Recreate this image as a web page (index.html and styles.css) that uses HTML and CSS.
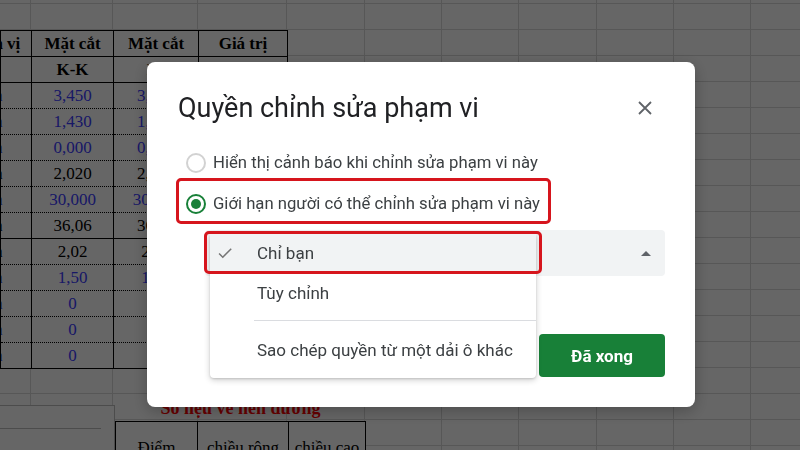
FILE: index.html
```html
<!DOCTYPE html>
<html lang="vi">
<head>
  <meta charset="UTF-8">
  <meta name="viewport" content="width=device-width, initial-scale=1.0">
  <title>Quyền chỉnh sửa phạm vi</title>
  <link rel="stylesheet" href="styles.css">
</head>
<body>

<div class="sheet">
  <table class="data">
    <colgroup>
      <col class="c0"><col class="c1"><col class="c2"><col class="c3">
    </colgroup>
    <tr class="head solid"><td class="cut"><span>Đơn vị</span></td><td>Mặt cắt</td><td>Mặt cắt</td><td>Giá trị</td></tr>
    <tr class="head solid"><td></td><td>K-K</td><td>I-I</td><td></td></tr>
    <tr class="blue"><td class="cut"><span>m</span></td><td>3,450</td><td>3,450</td><td></td></tr>
    <tr class="blue"><td class="cut"><span>m</span></td><td>1,430</td><td>1,430</td><td></td></tr>
    <tr class="blue"><td class="cut"><span>m</span></td><td>0,000</td><td>0,000</td><td></td></tr>
    <tr><td class="cut"><span>m</span></td><td>2,020</td><td>2,020</td><td></td></tr>
    <tr class="blue"><td class="cut"><span>m</span></td><td>30,000</td><td>30,000</td><td></td></tr>
    <tr class="solid"><td class="cut"><span>m</span></td><td>36,06</td><td>36,06</td><td></td></tr>
    <tr><td class="cut"><span>m</span></td><td>2,02</td><td>2,02</td><td></td></tr>
    <tr class="blue"><td class="cut"><span>m</span></td><td>1,50</td><td>1,50</td><td></td></tr>
    <tr class="blue"><td class="cut"><span>m</span></td><td>0</td><td>0</td><td></td></tr>
    <tr class="blue"><td class="cut"><span>m</span></td><td>0</td><td>0</td><td></td></tr>
    <tr class="blue solid"><td class="cut"><span>m</span></td><td>0</td><td>0</td><td></td></tr>
  </table>

  <div class="lower">
    <div class="shape"><div class="shape-line"></div></div>
    <div class="notes">
      <div class="notes-title">Số liệu về nền đường</div>
      <table class="small">
        <colgroup><col class="s1"><col class="s2"><col class="s3"></colgroup>
        <tr><td>Điểm</td><td>chiều rộng</td><td>chiều cao</td></tr>
      </table>
    </div>
  </div>
</div>

<div class="scrim">
  <div class="dialog">
    <div class="dialog-head">
      <h1 class="dialog-title">Quyền chỉnh sửa phạm vi</h1>
      <button class="close" aria-label="Đóng">
        <svg width="14" height="14" viewBox="0 0 14 14"><path d="M1 1L13 13M13 1L1 13" stroke="#5f6368" stroke-width="1.8" fill="none"/></svg>
      </button>
    </div>

    <div class="options">
      <div class="option"><span class="radio"></span>Hiển thị cảnh báo khi chỉnh sửa phạm vi này</div>
      <div class="option"><span class="radio on"></span>Giới hạn người có thể chỉnh sửa phạm vi này</div>
    </div>

    <div class="select"><span class="caret"></span></div>

    <div class="dialog-foot">
      <button class="btn-done">Đã xong</button>
    </div>

    <div class="menu">
      <div class="menu-item selected">
        <span class="menu-icon">
          <svg width="18" height="18" viewBox="0 0 24 24"><path d="M9 16.17L4.83 12l-1.42 1.41L9 19 21 7l-1.41-1.41z" fill="#757575"/></svg>
        </span>Chỉ bạn
      </div>
      <div class="menu-item"><span class="menu-icon"></span>Tùy chỉnh</div>
      <div class="menu-sep"></div>
      <div class="menu-item"><span class="menu-icon"></span>Sao chép quyền từ một dải ô khác</div>
    </div>

    <div class="mark mark-radio"></div>
    <div class="mark mark-menu"></div>
  </div>
</div>

</body>
</html>
```

FILE: styles.css
```css
body {
  margin: 0;
  font-family: Roboto, "Noto Sans", Arial, sans-serif;
}

/* spreadsheet behind the dialog */
.sheet {
  width: 800px;
  height: 450px;
  overflow: hidden;
  padding-top: 30px;
  box-sizing: border-box;
  font-family: "Liberation Serif", "Times New Roman", serif;
  background:
    linear-gradient(90deg,
      transparent 30px, #d9d9d9 30px 31px,
      transparent 31px 112px, #d9d9d9 112px 113px,
      transparent 113px 197px, #d9d9d9 197px 198px,
      transparent 198px 286px, #d9d9d9 286px 287px,
      transparent 287px 364px, #d9d9d9 364px 365px,
      transparent 365px 441px, #d9d9d9 441px 442px,
      transparent 442px 518px, #d9d9d9 518px 519px,
      transparent 519px 596px, #d9d9d9 596px 597px,
      transparent 597px 673px, #d9d9d9 673px 674px,
      transparent 674px 750px, #d9d9d9 750px 751px,
      transparent 751px),
    repeating-linear-gradient(180deg, transparent 0 3px, #d9d9d9 3px 4px, transparent 4px 26px),
    #fff;
}

.data {
  border-collapse: collapse;
  table-layout: fixed;
  width: 287px;
  background: #fff;
  font-size: 17px;
}

.c0 { width: 31px; }
.c1 { width: 82px; }
.c2 { width: 85px; }
.c3 { width: 89px; }

.data tr {
  height: 26px;
}

.data td {
  padding: 0;
  text-align: center;
  white-space: nowrap;
  overflow: hidden;
  border-left: 1px solid #000;
  border-right: 1px solid #000;
  border-bottom: 1px dotted #000;
}

.data tr:first-child td {
  border-top: 1px solid #000;
}

.data tr.solid td {
  border-bottom: 1px solid #000;
}

.data tr.head td {
  font-weight: bold;
}

.data tr.blue td {
  color: #3c3cff;
}

.data td.cut span {
  display: block;
  width: 70px;
  margin-left: -40px;
}

.lower {
  display: flex;
  margin-top: 26px;
}

.shape {
  width: 115px;
  height: 60px;
  margin-top: 10px;
  box-sizing: border-box;
  background: #fff;
  border-top: 1px solid #bfbfbf;
  border-right: 1px solid #bfbfbf;
}

.shape-line {
  width: 101px;
  margin-top: 22px;
  border-top: 1px solid #bfbfbf;
}

.notes-title {
  height: 26px;
  line-height: 26px;
  text-align: center;
  color: #ff0000;
  font-weight: bold;
  font-size: 18px;
}

.small {
  border-collapse: collapse;
  table-layout: fixed;
  width: 250px;
  background: #fff;
  font-size: 17px;
}

.s1 { width: 82px; }
.s2 { width: 91px; }
.s3 { width: 77px; }

.small td {
  height: 40px;
  padding: 6px 0 0;
  text-align: center;
  white-space: nowrap;
  border: 1px solid #000;
}

/* modal */
.scrim {
  position: fixed;
  inset: 0;
  background: rgba(0, 0, 0, 0.6);
}

.dialog {
  position: absolute;
  left: 147px;
  top: 62px;
  width: 548px;
  height: 345px;
  box-sizing: border-box;
  padding: 30px 30px 0 31px;
  background: #fff;
  border-radius: 8px;
  color: #3c4043;
  box-shadow: 0 4px 16px rgba(0, 0, 0, 0.25);
}

.dialog-head {
  display: flex;
  align-items: center;
  justify-content: space-between;
  height: 32px;
}

.dialog-title {
  margin: 0;
  font-size: 27px;
  font-weight: 400;
  line-height: 32px;
  color: #202124;
}

.close {
  width: 40px;
  height: 32px;
  padding: 0;
  border: none;
  background: none;
  display: flex;
  align-items: center;
  justify-content: center;
}

.options {
  margin-top: 18px;
}

.option {
  display: flex;
  align-items: center;
  height: 41px;
  font-size: 16.7px;
}

.radio {
  width: 20px;
  height: 20px;
  box-sizing: border-box;
  margin: 0 7px 0 8px;
  border: 2px solid #d2d2d2;
  border-radius: 50%;
  display: flex;
  align-items: center;
  justify-content: center;
}

.radio.on {
  border-color: #188038;
}

.radio.on::after {
  content: "";
  width: 10px;
  height: 10px;
  border-radius: 50%;
  background: #188038;
}

.select {
  height: 46px;
  margin: 6px 0 0 27px;
  padding-right: 14px;
  background: #f1f3f4;
  border-radius: 4px;
  display: flex;
  align-items: center;
  justify-content: flex-end;
}

.caret {
  width: 0;
  height: 0;
  border-left: 5px solid transparent;
  border-right: 5px solid transparent;
  border-bottom: 5px solid #5f6368;
}

.dialog-foot {
  display: flex;
  justify-content: flex-end;
  margin-top: 58px;
}

.btn-done {
  width: 126px;
  height: 43px;
  border: none;
  border-radius: 4px;
  background: #188038;
  color: #fff;
  font-family: Roboto, "Noto Sans", Arial, sans-serif;
  font-size: 17px;
  font-weight: bold;
}

.menu {
  position: absolute;
  left: 63px;
  top: 171px;
  width: 326px;
  padding-bottom: 8px;
  background: #fff;
  border-radius: 4px;
  box-shadow: 0 2px 6px rgba(0, 0, 0, 0.2), 0 1px 2px rgba(0, 0, 0, 0.12);
}

.menu-item {
  height: 40px;
  display: flex;
  align-items: center;
  font-size: 17px;
  color: #3c4043;
}

.menu-item.selected {
  background: #f1f3f4;
}

.menu-icon {
  width: 47px;
  padding-left: 6px;
  box-sizing: border-box;
  display: flex;
  align-items: center;
}

.menu-sep {
  height: 1px;
  margin: 7px 0 9px 44px;
  background: #dadce0;
}

/* red annotation boxes */
.mark {
  position: absolute;
  box-sizing: border-box;
  border: 3px solid #d6151d;
  border-radius: 5px;
  pointer-events: none;
}

.mark-radio {
  left: 29px;
  top: 116px;
  width: 375px;
  height: 46px;
}

.mark-menu {
  left: 57px;
  top: 169px;
  width: 338px;
  height: 43px;
}
```
